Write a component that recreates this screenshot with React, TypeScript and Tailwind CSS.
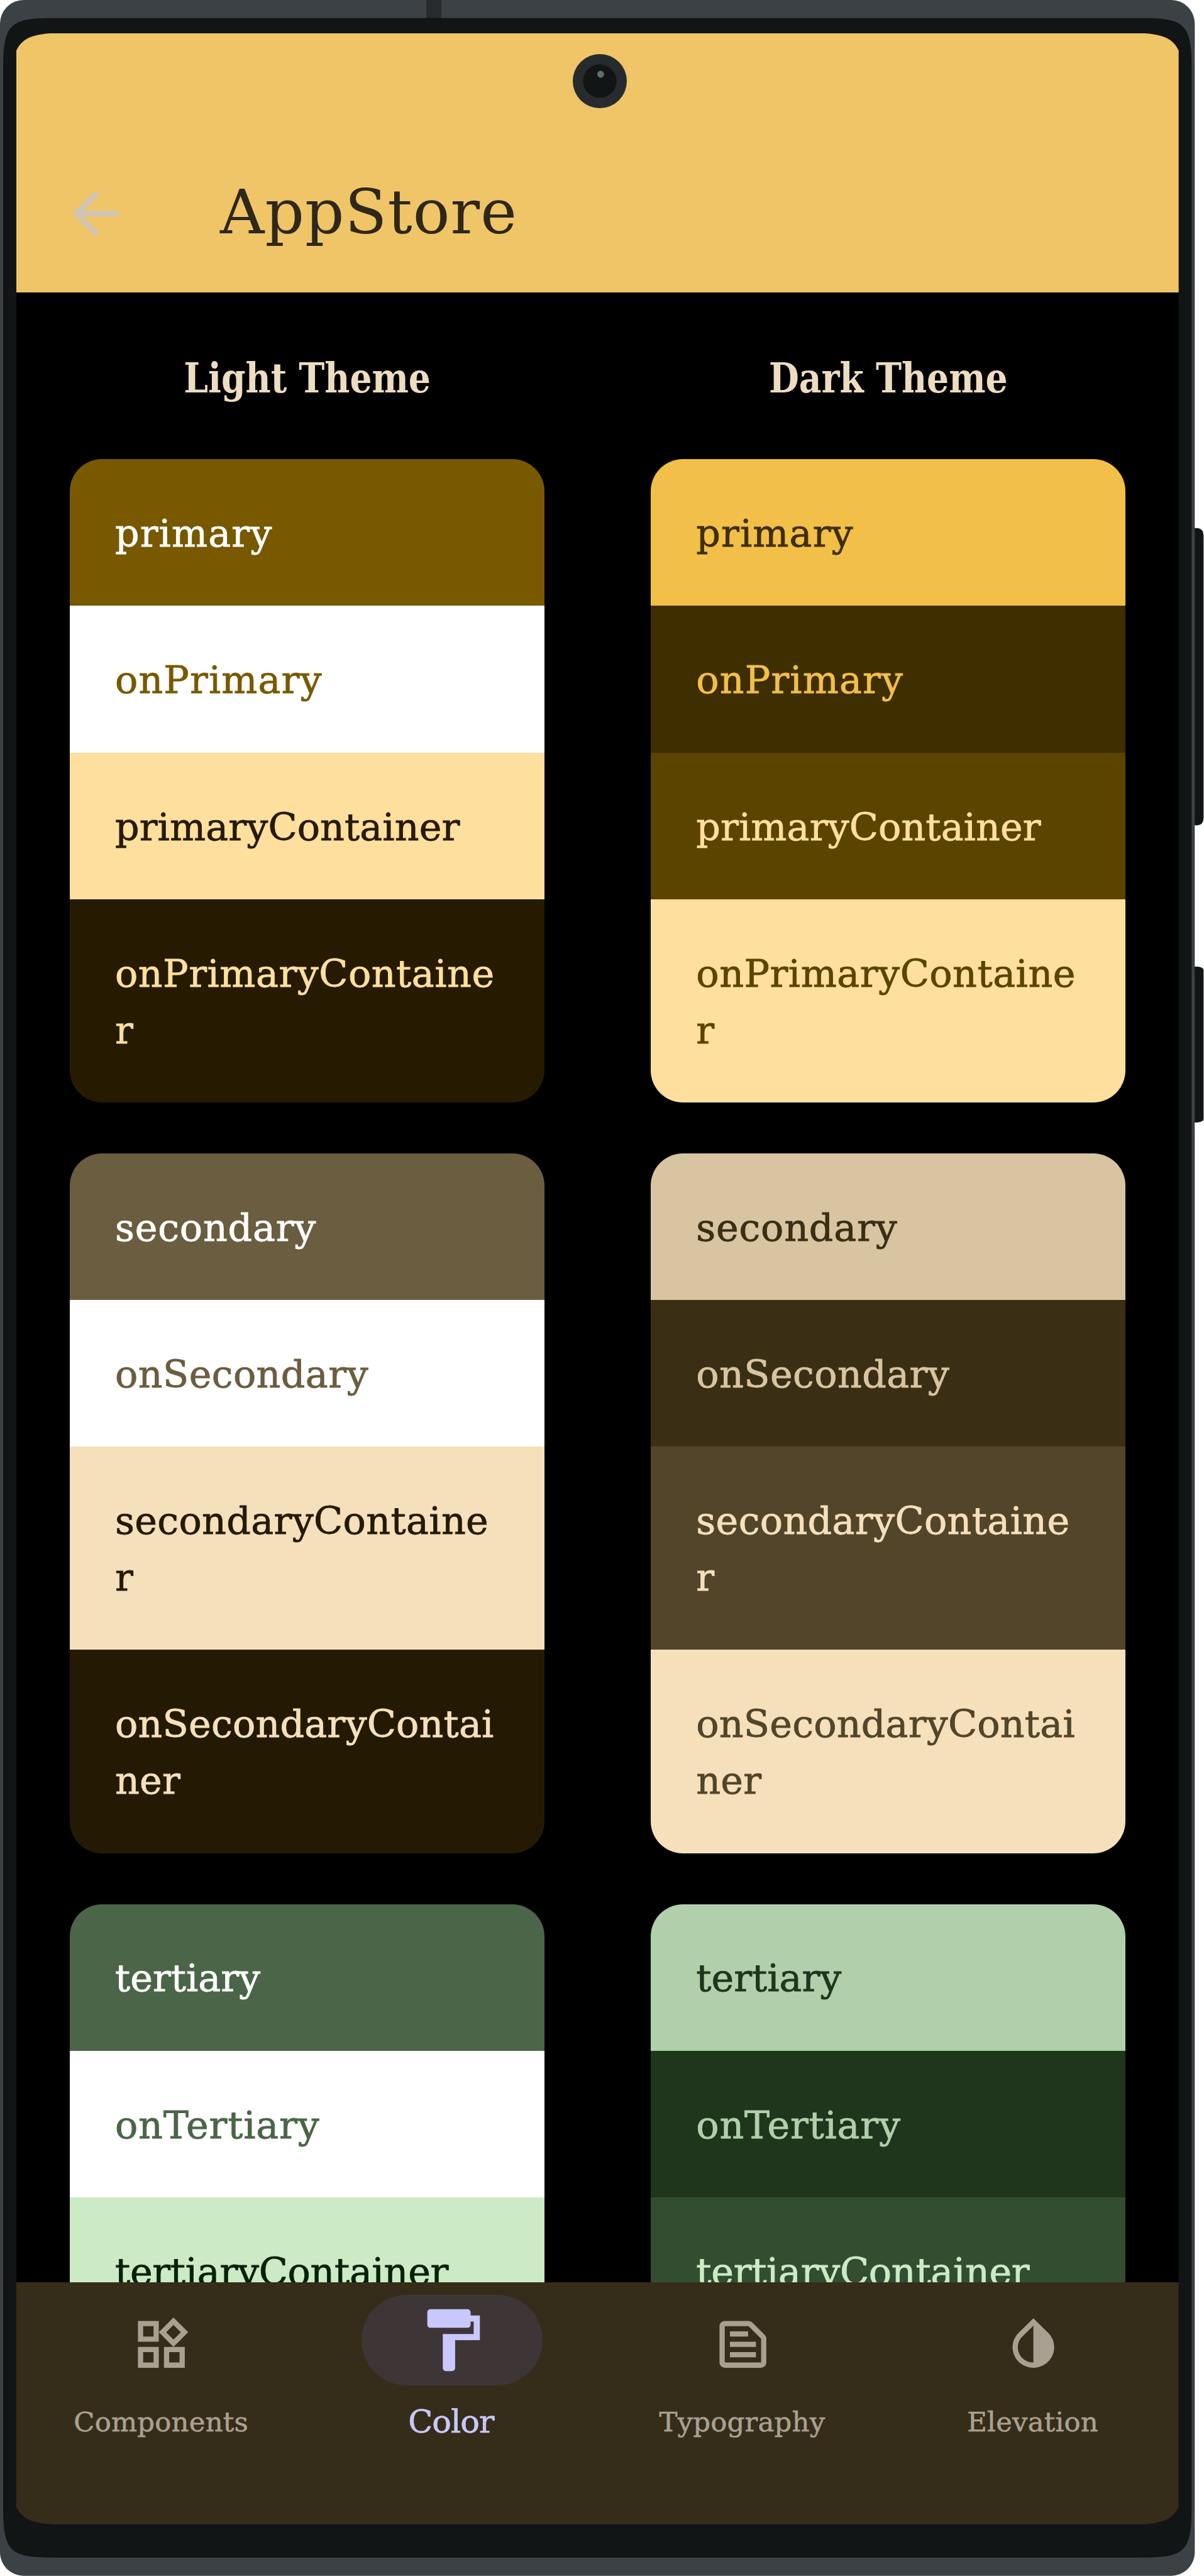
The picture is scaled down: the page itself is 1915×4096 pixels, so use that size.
import type { ReactNode } from "react";

type Row = { label: string; tone: string };

const lightGroups: Row[][] = [
  [
    { label: "primary", tone: "bg-[#785900] text-white tracking-[1.1px]" },
    { label: "onPrimary", tone: "bg-white text-[#785900] tracking-[1.1px]" },
    { label: "primaryContainer", tone: "bg-[#ffdf9e] text-[#261a00] tracking-[0.1px]" },
    { label: "onPrimaryContaine\nr", tone: "bg-[#261a00] text-[#ffdf9e] tracking-[0.5px]" },
  ],
  [
    { label: "secondary", tone: "bg-[#6b5d3f] text-white tracking-[0.8px]" },
    { label: "onSecondary", tone: "bg-white text-[#6b5d3f] tracking-[0.4px]" },
    { label: "secondaryContaine\nr", tone: "bg-[#f5e0bb] text-[#241a04] tracking-[0.35px]" },
    { label: "onSecondaryContai\nner", tone: "bg-[#241a04] text-[#f5e0bb] tracking-[0.2px]" },
  ],
  [
    { label: "tertiary", tone: "bg-[#4a6547] text-white tracking-[0px]" },
    { label: "onTertiary", tone: "bg-white text-[#4a6547] tracking-[0.8px]" },
    { label: "tertiaryContainer", tone: "bg-[#cceac4] text-[#072109] tracking-[-0.3px]" },
  ],
];

const darkGroups: Row[][] = [
  [
    { label: "primary", tone: "bg-[#f2bf48] text-[#3f2e00] tracking-[1.1px]" },
    { label: "onPrimary", tone: "bg-[#3f2e00] text-[#f2bf48] tracking-[1.1px]" },
    { label: "primaryContainer", tone: "bg-[#5b4300] text-[#ffdf9e] tracking-[0.1px]" },
    { label: "onPrimaryContaine\nr", tone: "bg-[#ffdf9e] text-[#5b4300] tracking-[0.5px]" },
  ],
  [
    { label: "secondary", tone: "bg-[#d8c4a0] text-[#3a2f15] tracking-[0.8px]" },
    { label: "onSecondary", tone: "bg-[#3a2f15] text-[#d8c4a0] tracking-[0.4px]" },
    { label: "secondaryContaine\nr", tone: "bg-[#52452a] text-[#f5e0bb] tracking-[0.35px]" },
    { label: "onSecondaryContai\nner", tone: "bg-[#f5e0bb] text-[#52452a] tracking-[0.2px]" },
  ],
  [
    { label: "tertiary", tone: "bg-[#b0cfaa] text-[#1f361d] tracking-[0px]" },
    { label: "onTertiary", tone: "bg-[#1f361d] text-[#b0cfaa] tracking-[0.8px]" },
    { label: "tertiaryContainer", tone: "bg-[#334d31] text-[#cceac4] tracking-[-0.3px]" },
  ],
];

function Swatches({ rows }: { rows: Row[] }) {
  return (
    <div className="shrink-0 overflow-hidden rounded-[51px]">
      {rows.map((row) => (
        <div
          key={row.label}
          className={`${row.tone} whitespace-pre pt-[72.9px] pr-[60px] pb-[70.3px] pl-[72.3px] text-[60.3px] leading-[90px] [-webkit-text-stroke:0.8px_currentColor]`}
        >
          {row.label}
        </div>
      ))}
    </div>
  );
}

function ThemeColumn({ title, groups }: { title: string; groups: Row[][] }) {
  return (
    <section className="flex w-1/2 flex-col px-[84.7px]">
      <h2 className="mt-[91px] mb-[84px] h-[90px] text-center font-['DejaVu_Serif_Condensed','DejaVu_Serif',serif] text-[64.5px] leading-[90px] font-bold text-[#eddcc0]">
        <span className="inline-block scale-x-[0.95]">{title}</span>
      </h2>
      <div className="flex flex-col gap-[80.9px]">
        {groups.map((rows) => (
          <Swatches key={rows[0].label} rows={rows} />
        ))}
      </div>
    </section>
  );
}

function Icon({ d, className }: { d: string; className: string }) {
  return (
    <svg viewBox="0 0 24 24" fill="currentColor" className={className}>
      <path d={d} />
    </svg>
  );
}

const paths = {
  back: "M20 11H7.83l5.59-5.59L12 4l-8 8 8 8 1.41-1.41L7.83 13H20v-2z",
  widgets:
    "M16.66 4.52l2.83 2.83-2.83 2.83-2.83-2.83 2.83-2.83M9 5v4H5V5h4m10 10v4h-4v-4h4M9 15v4H5v-4h4m7.66-13.31L11 7.34 16.66 13l5.66-5.66-5.66-5.65zM11 3H3v8h8V3zm10 10h-8v8h8v-8zm-10 0H3v8h8v-8z",
  paint:
    "M18 4V3c0-.55-.45-1-1-1H5c-.55 0-1 .45-1 1v4c0 .55.45 1 1 1h12c.55 0 1-.45 1-1V6h1v4H9v11c0 .55.45 1 1 1h2c.55 0 1-.45 1-1v-9h8V4h-3z",
  snippet:
    "M14.17 5L19 9.83V19H5V5h9.17m0-2H5c-1.1 0-2 .9-2 2v14c0 1.1.9 2 2 2h14c1.1 0 2-.9 2-2V9.83c0-.53-.21-1.04-.59-1.41l-4.83-4.83c-.37-.38-.88-.59-1.41-.59zM7 15h10v2H7v-2zm0-4h10v2H7v-2zm0-4h7v2H7V7z",
  contrast:
    "M12 4.81V19c-3.31 0-6-2.63-6-5.87 0-1.56.62-3.03 1.75-4.14L12 4.81M12 2L6.35 7.56C4.9 8.99 4 10.96 4 13.13 4 17.48 7.58 21 12 21s8-3.52 8-7.87c0-2.17-.9-4.14-2.35-5.57L12 2z",
};

function NavItem({ label, active, children }: { label: string; active?: boolean; children: ReactNode }) {
  return (
    <div className="flex w-1/4 flex-col items-center pt-[20.5px]">
      <div
        className={
          active
            ? "flex h-[144px] w-[288px] items-center justify-center rounded-full bg-[#3e3636] text-[#c8c8fc]"
            : "flex h-[144px] w-[288px] items-start justify-center pt-[28.5px] text-[#aaa091]"
        }
      >
        {children}
      </div>
      <div
        className={
          active
            ? "mt-[18px] h-[80px] pr-[4px] text-[51px] leading-[80px] tracking-[-1px] text-[#c8c8fc] [-webkit-text-stroke:0.7px_currentColor]"
            : "mt-[18.4px] h-[80px] pr-[2px] text-[43.4px] leading-[80px] tracking-[0.2px] text-[#aaa091] [-webkit-text-stroke:0.6px_currentColor]"
        }
      >
        {label}
      </div>
    </div>
  );
}

function Chassis() {
  return (
    <svg viewBox="0 0 2804 5999" preserveAspectRatio="none" className="absolute inset-0 h-[4096px] w-[1915px]">
      <path d="M2776 1230h14q13 2 13 18v656q0 16-13 18h-14zM2776 2251h14q13 2 13 8v347q0 6-13 8h-14z" fill="#111515" />
      <rect width="2782.5" height="5998.5" rx="55" fill="#3b4144" />
      <rect x="993" width="35" height="44" fill="#272b2d" />
      <path
        d="M7.3 158C7.3 55 24 42 125 42H2657.5C2758.5 42 2775.2 55 2775.2 158V5840C2775.2 5943 2758.5 5956 2657.5 5956H125C24 5956 7.3 5943 7.3 5840Z"
        fill="#111515"
      />
    </svg>
  );
}

export default function App() {
  return (
    <div className="relative h-[4096px] w-[1915px] overflow-hidden bg-white pt-[52.6px] pl-[26px] font-['DejaVu_Serif',serif]">
      <Chassis />
      <div className="relative flex h-[3961.6px] w-[1848.7px] flex-col overflow-hidden bg-black [clip-path:path('M0_28C8.2_10.3_23.2_0_69.7_0H1779C1825.5_0_1840.5_10.3_1848.7_28V3933.6C1840.5_3951.3_1825.5_3961.6_1779_3961.6H69.7C23.2_3961.6_8.2_3951.3_0_3933.6Z')]">
        <header className="flex h-[412.7px] shrink-0 items-start bg-[#efc567]">
          <Icon d={paths.back} className="mt-[232.5px] ml-[70.5px] size-[109px] shrink-0 text-[#d0c4b4]" />
          <h1 className="mt-[224px] ml-[144.5px] text-[97.5px] leading-[120px] tracking-[1.1px] text-[#2e271a]">AppStore</h1>
        </header>
        <main className="flex min-h-0 flex-1 items-start overflow-hidden">
          <ThemeColumn title="Light Theme" groups={lightGroups} />
          <ThemeColumn title="Dark Theme" groups={darkGroups} />
        </main>
        <nav className="flex h-[385.6px] shrink-0 bg-[#352d19]">
          <NavItem label="Components">
            <Icon d={paths.widgets} className="size-[99.3px]" />
          </NavItem>
          <NavItem label="Color" active>
            <Icon d={paths.paint} className="size-[118px]" />
          </NavItem>
          <NavItem label="Typography">
            <Icon d={paths.snippet} className="size-[99.3px]" />
          </NavItem>
          <NavItem label="Elevation">
            <Icon d={paths.contrast} className="size-[99.3px]" />
          </NavItem>
        </nav>
      </div>
      <svg viewBox="0 0 126 126" className="absolute top-[86px] left-[911px] size-[86px]">
        <circle cx="63" cy="63" r="63" fill="#272b2d" />
        <circle cx="63" cy="63" r="39" fill="#111515" />
        <circle cx="65" cy="47" r="8" fill="#5f6e73" />
      </svg>
    </div>
  );
}
